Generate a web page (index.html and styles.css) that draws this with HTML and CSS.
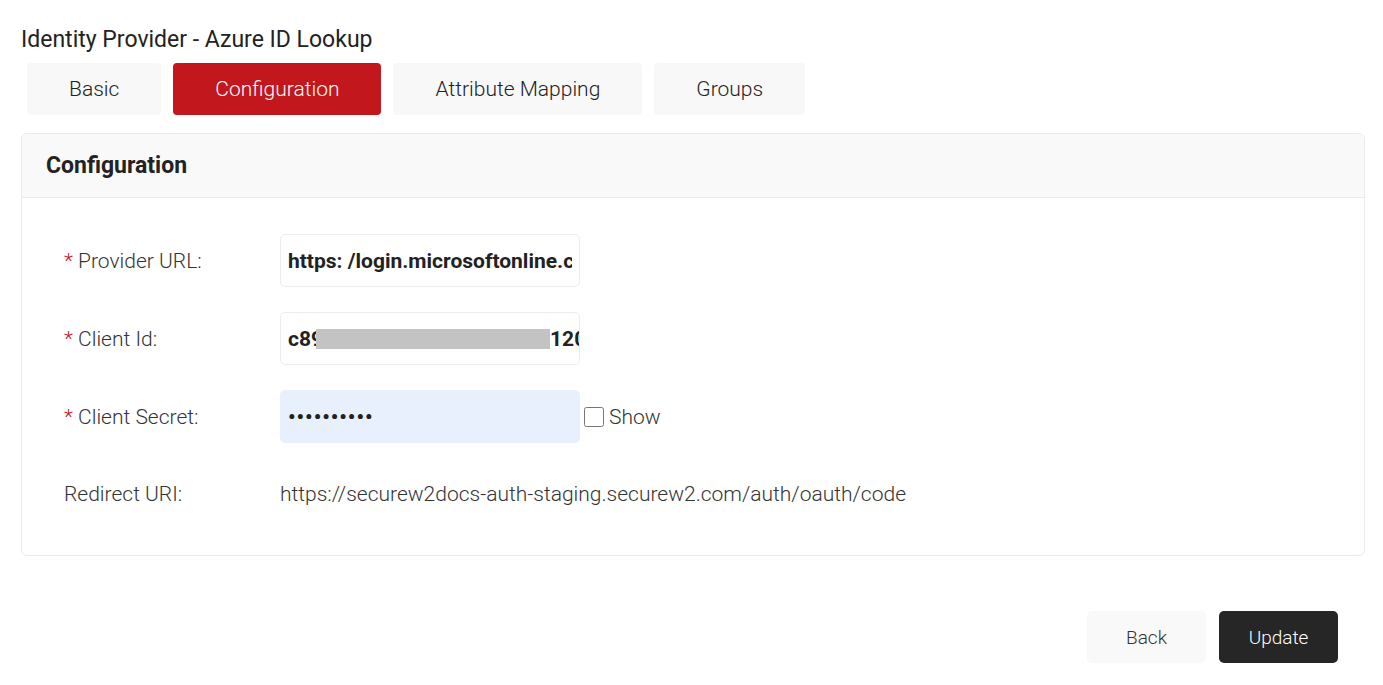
FILE: index.html
```html
<!DOCTYPE html>
<html lang="en">
  <head>
    <meta charset="UTF-8" />
    <meta name="viewport" content="width=device-width, initial-scale=1.0" />
    <title>Identity Provider - Azure ID Lookup</title>
    <link rel="stylesheet" href="styles.css">
  </head>
  <body>
    <div class="page">
      <h2 class="title">Identity Provider - Azure ID Lookup</h2>
      <div class="tabs">
        <a class="tab">Basic</a>
        <a class="tab active">Configuration</a>
        <a class="tab">Attribute Mapping</a>
        <a class="tab">Groups</a>
      </div>
      <div class="card">
        <div class="card-head">Configuration</div>
        <div class="card-body">
          <div class="row">
            <label class="label"><span class="req">*</span> Provider URL:</label>
            <input class="field" type="text" value="https: /login.microsoftonline.com/common/v2.0">
          </div>
          <div class="row">
            <label class="label"><span class="req">*</span> Client Id:</label>
            <div class="field masked">
              <span>c89</span>
              <span class="blur"></span>
              <span class="tail">120</span>
            </div>
          </div>
          <div class="row">
            <label class="label"><span class="req">*</span> Client Secret:</label>
            <input class="field secret" type="password" value="abcdefghij">
            <label class="show"><input type="checkbox"> Show</label>
          </div>
          <div class="row">
            <span class="label">Redirect URI:</span>
            <span class="value">https://securew2docs-auth-staging.securew2.com/auth/oauth/code</span>
          </div>
        </div>
      </div>
      <div class="actions">
        <button class="btn back">Back</button>
        <button class="btn update">Update</button>
      </div>
    </div>
  </body>
</html>
```

FILE: styles.css
```css
body {
  margin: 0;
  padding: 0;
  background-color: white;
  font-family: Roboto, "Liberation Sans", sans-serif;
  color: #222;
}
.page {
  padding: 26px 18px 0 21px;
}
.title {
  margin: 0;
  font-size: 23px;
  font-weight: 400;
  line-height: 27px;
  color: #222;
}
.tabs {
  display: flex;
  gap: 12px;
  margin: 10px 0 18px 6px;
}
.tab {
  display: flex;
  align-items: center;
  justify-content: center;
  height: 52px;
  padding: 0 42px;
  border-radius: 4px;
  background-color: #f8f8f8;
  font-size: 21px;
  font-weight: 300;
  color: #222;
}
.tab.active {
  background-color: #c3171e;
  color: white;
}
.card {
  border: 1px solid #ebebeb;
  border-radius: 6px;
  overflow: hidden;
}
.card-head {
  height: 63px;
  display: flex;
  align-items: center;
  padding-left: 24px;
  background-color: #f9f9f9;
  border-bottom: 1px solid #ebebeb;
  font-size: 23px;
  font-weight: 700;
  color: #222;
}
.card-body {
  padding: 36px 42px 35px 42px;
  display: flex;
  flex-direction: column;
  gap: 25px;
}
.row {
  display: flex;
  align-items: center;
  min-height: 52px;
}
.label {
  width: 216px;
  font-size: 21px;
  font-weight: 300;
  color: #333;
}
.req {
  color: #c3171e;
}
.field {
  box-sizing: border-box;
  width: 300px;
  height: 53px;
  border: 1px solid #ececec;
  border-radius: 5px;
  padding: 0 7px;
  font-family: Roboto, "Liberation Sans", sans-serif;
  font-size: 21px;
  font-weight: 700;
  color: #222;
  background-color: white;
  outline: none;
}
.masked {
  display: flex;
  align-items: center;
  overflow: hidden;
  white-space: nowrap;
}
.blur {
  display: inline-block;
  width: 234px;
  height: 20px;
  background-color: #c3c3c3;
  margin-left: -7px;
  flex-shrink: 0;
}
.secret {
  background-color: #e8f0fd;
  border-color: #e8f0fd;
  letter-spacing: 1px;
}
.show {
  display: flex;
  align-items: center;
  gap: 5px;
  margin-left: 4px;
  font-size: 21px;
  font-weight: 300;
  color: #333;
}
.show input {
  width: 20px;
  height: 20px;
  margin: 0;
}
.value {
  font-size: 21px;
  font-weight: 300;
  color: #333;
}
.actions {
  display: flex;
  justify-content: flex-end;
  gap: 13px;
  margin-top: 55px;
  padding-right: 27px;
}
.btn {
  width: 119px;
  height: 52px;
  border: none;
  border-radius: 5px;
  font-family: Roboto, "Liberation Sans", sans-serif;
  font-size: 19px;
  font-weight: 300;
  cursor: pointer;
}
.back {
  background-color: #f9f9f9;
  color: #333;
}
.update {
  background-color: #262626;
  color: white;
}
```
